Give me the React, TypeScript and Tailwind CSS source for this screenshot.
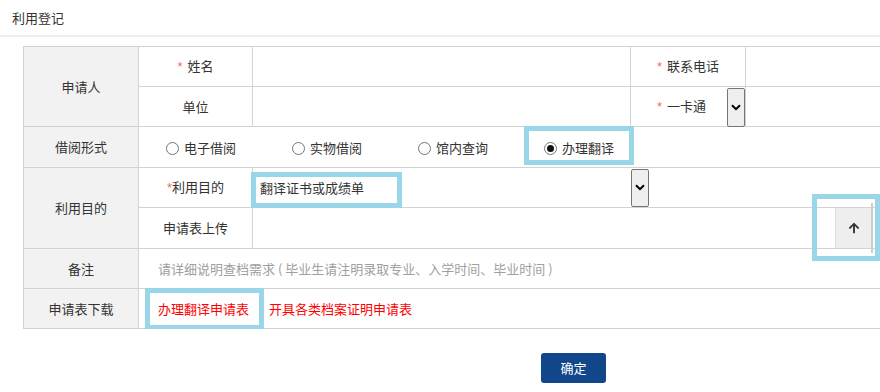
import React from "react";

const Chevron = () => (
  <svg width="10" height="7" viewBox="0 0 10 7" fill="none">
    <path d="M1 1.2 L5 5.2 L9 1.2" stroke="#000" strokeWidth="2" />
  </svg>
);

const ArrowUp = () => (
  <svg width="12" height="12" viewBox="0 0 448 512">
    <path
      fill="#333"
      d="M34.9 289.5l-22.2-22.2c-9.4-9.4-9.4-24.6 0-33.9L207 39c9.4-9.4 24.6-9.4 33.9 0l194.3 194.3c9.4 9.4 9.4 24.6 0 33.9L413 289.4c-9.5 9.5-25 9.3-34.3-.4L264 168.6V456c0 13.3-10.7 24-24 24h-32c-13.3 0-24-10.7-24-24V168.6L69.2 289.1c-9.3 9.8-24.8 10-34.3.4z"
    />
  </svg>
);

const Star = () => <span className="text-[#f26b6b] font-['Liberation_Sans',sans-serif] mr-[5px]">*</span>;

const Radio = ({ checked, label }: { checked?: boolean; label: string }) => (
  <div className="w-[126px] flex items-center">
    <span className="w-[13px] h-[13px] rounded-full border border-[#767676] bg-white flex items-center justify-center">
      {checked && <span className="w-[7px] h-[7px] rounded-full bg-[#111]" />}
    </span>
    <span className="ml-[5px]">{label}</span>
  </div>
);

export default function App() {
  const cell = "border border-[#d3d3d3] p-0";
  const head = "border border-[#d3d3d3] p-0 bg-[#f2f2f2] text-center";
  const hl = "absolute border-[5px] border-[#98d6e8] z-10 pointer-events-none";
  return (
    <div className="w-[880px] h-[392px] overflow-hidden bg-white text-[13px] leading-[20px] text-[#333] font-['Noto_Sans_CJK_SC','Microsoft_YaHei',sans-serif]">
      <div className="h-[37px] border-b-2 border-[#eeeeee] pl-[12px] flex items-center">利用登记</div>
      <div className="overflow-hidden pt-[9px] pl-[23px]">
        <table className="table-fixed border-collapse w-[900px]">
          <colgroup>
            <col className="w-[115px]" />
            <col className="w-[114px]" />
            <col className="w-[378px]" />
            <col className="w-[115px]" />
            <col className="w-[178px]" />
          </colgroup>
          <tbody>
            <tr className="h-[40px]">
              <td rowSpan={2} className={head}>申请人</td>
              <td className={cell + " text-center"}><Star />姓名</td>
              <td className={cell}></td>
              <td className={cell + " text-center"}><Star />联系电话</td>
              <td className={cell}></td>
            </tr>
            <tr className="h-[40px]">
              <td className={cell + " text-center"}>单位</td>
              <td className={cell}></td>
              <td className={cell + " relative"}>
                <div className="pl-[26px]"><Star />一卡通</div>
                <div className="absolute right-0 top-[1px] w-[18px] h-[39px] border border-[#767676] bg-[#efefef] rounded-[2px] flex items-center justify-center">
                  <Chevron />
                </div>
              </td>
              <td className={cell}></td>
            </tr>
            <tr className="h-[41px]">
              <td className={head}>借阅形式</td>
              <td colSpan={4} className={cell + " relative"}>
                <div className="flex items-center pl-[27px] pt-[2px]">
                  <Radio label="电子借阅" />
                  <Radio label="实物借阅" />
                  <Radio label="馆内查询" />
                  <Radio label="办理翻译" checked />
                </div>
                <div className={hl + " left-[385px] top-[-1px] w-[110px] h-[39px]"} />
              </td>
            </tr>
            <tr className="h-[40px]">
              <td rowSpan={2} className={head}>利用目的</td>
              <td className={cell + " text-center"}>
                <span className="text-[#f26b6b] font-['Liberation_Sans',sans-serif]">*</span>利用目的
              </td>
              <td colSpan={3} className={cell + " relative"}>
                <div className="w-[396px] h-[38px] flex items-center justify-between">
                  <span className="pl-[7px]">翻译证书或成绩单</span>
                  <div className="w-[18px] h-[38px] border border-[#767676] bg-[#efefef] rounded-[2px] flex items-center justify-center">
                    <Chevron />
                  </div>
                </div>
                <div className={hl + " left-[-2px] top-[4px] w-[151px] h-[36px]"} />
              </td>
            </tr>
            <tr className="h-[41px]">
              <td className={cell + " text-center"}>申请表上传</td>
              <td colSpan={3} className={cell + " relative"}>
                <div className="h-[40px] pl-[582px] flex">
                  <div className="w-[37px] h-[40px] bg-[#eeeeee] border-l border-[#dddddd] flex items-center justify-center">
                    <ArrowUp />
                  </div>
                </div>
                <div className="absolute left-[618px] top-[-5px] w-[2px] h-[50px] bg-[#cccccc] z-20" />
                <div className={hl + " left-[559px] top-[-14px] w-[68px] h-[67px]"} />
              </td>
            </tr>
            <tr className="h-[40px]">
              <td className={head}>备注</td>
              <td colSpan={4} className={cell}>
                <div className="pl-[19px] text-[#a0a0a0]">请详细说明查档需求 ( 毕业生请注明录取专业、入学时间、毕业时间 )</div>
              </td>
            </tr>
            <tr className="h-[40px]">
              <td className={head}>申请表下载</td>
              <td colSpan={4} className={cell + " relative"}>
                <div className="flex items-center pl-[19px] text-[#ff0000]">
                  <span>办理翻译申请表</span>
                  <span className="ml-[20px]">开具各类档案证明申请表</span>
                </div>
                <div className={hl + " left-[6px] top-[-1px] w-[119px] h-[42px]"} />
              </td>
            </tr>
          </tbody>
        </table>
      </div>
      <div className="ml-[541px] mt-[24px] w-[65px] h-[30px] rounded-[3px] bg-[#12468a] text-white flex items-center justify-center">确定</div>
    </div>
  );
}
